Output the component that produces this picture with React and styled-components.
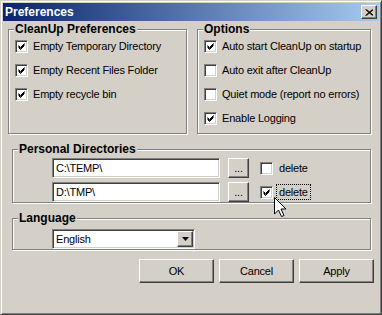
import React from 'react';
import styled, { createGlobalStyle } from 'styled-components';

const GlobalStyle = createGlobalStyle`
  html, body {
    margin: 0;
    padding: 0;
    background: #d4d0c8;
  }
  body {
    font-family: "Liberation Sans", Arial, sans-serif;
  }
`;

const Window = styled.div`
  position: relative;
  box-sizing: border-box;
  width: 382px;
  height: 315px;
  padding: 2px;
  background: #d4d0c8;
  border: 1px solid;
  border-color: #d4d0c8 #404040 #404040 #d4d0c8;
  box-shadow: inset 1px 1px 0 #fff, inset -1px -1px 0 #808080;
  display: flex;
  flex-direction: column;
  font-size: 11px;
  letter-spacing: -0.2px;
  color: #000;
`;

const TitleBar = styled.div`
  height: 18px;
  display: flex;
  align-items: center;
  justify-content: space-between;
  padding: 0 2px 0 2px;
  background: linear-gradient(to right, #0a246a, #a6caf0);
  color: #fff;
  font-size: 12px;
  font-weight: bold;
  letter-spacing: 0;
`;

const CloseButton = styled.div`
  box-sizing: border-box;
  width: 16px;
  height: 14px;
  background: #d4d0c8;
  border: 1px solid;
  border-color: #fff #404040 #404040 #fff;
  box-shadow: inset -1px -1px 0 #808080;
  display: flex;
  align-items: center;
  justify-content: center;
`;

const TopRow = styled.div`
  display: flex;
  gap: 10px;
  margin-top: 1px;
  padding: 0 8px 0 5px;
`;

const Group = styled.fieldset`
  box-sizing: border-box;
  margin: 0;
  min-width: 0;
  padding: 0 6px;
  width: ${({ $width }) => ($width ? `${$width}px` : 'auto')};
  flex: ${({ $width }) => ($width ? 'none' : '1')};
  height: ${({ $height }) => $height}px;
  border: 1px solid #808080;
  box-shadow: 1px 1px 0 #fff, inset 1px 1px 0 #fff;
`;

const Legend = styled.legend`
  padding: 0 1px;
  margin-left: -1px;
  font-size: 12px;
  font-weight: bold;
  line-height: 14px;
  letter-spacing: 0;
  background: #d4d0c8;
`;

const CheckList = styled.div`
  display: flex;
  flex-direction: column;
  gap: 4px;
`;

const CheckRow = styled.label`
  display: flex;
  align-items: center;
  gap: 5px;
  height: 20px;
  white-space: nowrap;
`;

const Box = styled.span`
  box-sizing: border-box;
  flex: none;
  width: 13px;
  height: 13px;
  background: #fff;
  border: 1px solid;
  border-color: #808080 #fff #fff #808080;
  box-shadow: inset 1px 1px 0 #404040, inset -1px -1px 0 #d4d0c8;
  display: flex;
  align-items: center;
  justify-content: center;
`;

const FocusText = styled.span`
  padding: 0 1px;
  outline: ${({ $focused }) => ($focused ? '1px dotted #000' : 'none')};
  outline-offset: 1px;
`;

const Lower = styled.div`
  display: flex;
  flex-direction: column;
  gap: 8px;
  margin-top: 8px;
  padding: 0 8px 0 9px;
`;

const FieldList = styled.div`
  display: flex;
  flex-direction: column;
  gap: 4px;
  padding: ${({ $top }) => $top}px 0 0 33px;
`;

const DirRow = styled.div`
  display: flex;
  align-items: center;
`;

const TextField = styled.div`
  box-sizing: border-box;
  width: 168px;
  height: 20px;
  padding: 0 3px;
  background: #fff;
  border: 1px solid;
  border-color: #808080 #fff #fff #808080;
  box-shadow: inset 1px 1px 0 #404040, inset -1px -1px 0 #d4d0c8;
  display: flex;
  align-items: center;
`;

const RaisedButton = styled.div`
  box-sizing: border-box;
  width: ${({ $w }) => $w}px;
  height: ${({ $h }) => $h}px;
  background: #d4d0c8;
  border: 1px solid;
  border-color: #fff #404040 #404040 #fff;
  box-shadow: inset -1px -1px 0 #808080, inset 1px 1px 0 #d4d0c8;
  display: flex;
  align-items: center;
  justify-content: center;
  flex: none;
`;

const BrowseButton = styled(RaisedButton)`
  margin-left: 8px;
  align-items: flex-end;
  padding-bottom: 3px;
`;

const DeleteCheck = styled(CheckRow)`
  margin-left: 11px;
  height: auto;
`;

const Select = styled.div`
  box-sizing: border-box;
  width: 143px;
  height: 20px;
  padding: 0 1px 0 3px;
  background: #fff;
  border: 1px solid;
  border-color: #808080 #fff #fff #808080;
  box-shadow: inset 1px 1px 0 #404040, inset -1px -1px 0 #d4d0c8;
  display: flex;
  align-items: center;
  justify-content: space-between;
`;

const ButtonRow = styled.div`
  display: flex;
  justify-content: flex-end;
  gap: 5px;
  margin-top: 9px;
  padding-right: 5px;
`;

const Cursor = styled.svg`
  position: absolute;
  left: 273px;
  top: 196px;
`;

const Check = () => (
  <svg width="9" height="9" viewBox="0 0 9 9">
    <path d="M1.5 3.5 L3.5 5.5 L7.5 1.5 M1.5 4.5 L3.5 6.5 L7.5 2.5 M1.5 5.5 L3.5 7.5 L7.5 3.5" stroke="#000" strokeWidth="1" fill="none" />
  </svg>
);

const CheckBox = ({ checked }) => <Box>{checked && <Check />}</Box>;

const cleanupItems = [
  { label: 'Empty Temporary Directory', checked: true },
  { label: 'Empty Recent Files Folder', checked: true },
  { label: 'Empty recycle bin', checked: true },
];

const optionItems = [
  { label: 'Auto start CleanUp on startup', checked: true },
  { label: 'Auto exit after CleanUp', checked: false },
  { label: 'Quiet mode (report no errors)', checked: false },
  { label: 'Enable Logging', checked: true },
];

const directories = [
  { path: 'C:\\TEMP\\', remove: false },
  { path: 'D:\\TMP\\', remove: true },
];

export default function App() {
  return (
    <>
      <GlobalStyle />
      <Window>
        <TitleBar>
          <span>Preferences</span>
          <CloseButton>
            <svg width="8" height="7" viewBox="0 0 8 7">
              <path d="M0.5 0.5 L7.5 6.5 M1.5 0.5 L8.5 6.5 M7.5 0.5 L0.5 6.5 M8.5 0.5 L1.5 6.5" stroke="#000" strokeWidth="1" />
            </svg>
          </CloseButton>
        </TitleBar>

        <TopRow>
          <Group $width={179} $height={112}>
            <Legend>CleanUp Preferences</Legend>
            <CheckList>
              {cleanupItems.map((item) => (
                <CheckRow key={item.label}>
                  <CheckBox checked={item.checked} />
                  {item.label}
                </CheckRow>
              ))}
            </CheckList>
          </Group>
          <Group $height={112}>
            <Legend>Options</Legend>
            <CheckList>
              {optionItems.map((item) => (
                <CheckRow key={item.label}>
                  <CheckBox checked={item.checked} />
                  {item.label}
                </CheckRow>
              ))}
            </CheckList>
          </Group>
        </TopRow>

        <Lower>
          <Group $height={71}>
            <Legend>Personal Directories</Legend>
            <FieldList $top={2}>
              {directories.map((dir) => (
                <DirRow key={dir.path}>
                  <TextField>{dir.path}</TextField>
                  <BrowseButton $w={21} $h={20}>...</BrowseButton>
                  <DeleteCheck>
                    <CheckBox checked={dir.remove} />
                    <FocusText $focused={dir.remove}>delete</FocusText>
                  </DeleteCheck>
                </DirRow>
              ))}
            </FieldList>
          </Group>
          <Group $height={48}>
            <Legend>Language</Legend>
            <FieldList $top={4}>
              <Select>
                <span>English</span>
                <RaisedButton $w={16} $h={16}>
                  <svg width="7" height="4" viewBox="0 0 7 4">
                    <path d="M0 0 H7 L3.5 4 Z" fill="#000" />
                  </svg>
                </RaisedButton>
              </Select>
            </FieldList>
          </Group>
        </Lower>

        <ButtonRow>
          <RaisedButton $w={75} $h={24}>OK</RaisedButton>
          <RaisedButton $w={75} $h={24}>Cancel</RaisedButton>
          <RaisedButton $w={75} $h={24}>Apply</RaisedButton>
        </ButtonRow>

        <Cursor width="13" height="21" viewBox="0 0 13 21">
          <path d="M0.5 0.5 L0.5 17 L4.5 13 L7.5 19.5 L10 18.5 L7 12 L12 12 Z" fill="#fff" stroke="#000" strokeWidth="1" strokeLinejoin="miter" />
        </Cursor>
      </Window>
    </>
  );
}
